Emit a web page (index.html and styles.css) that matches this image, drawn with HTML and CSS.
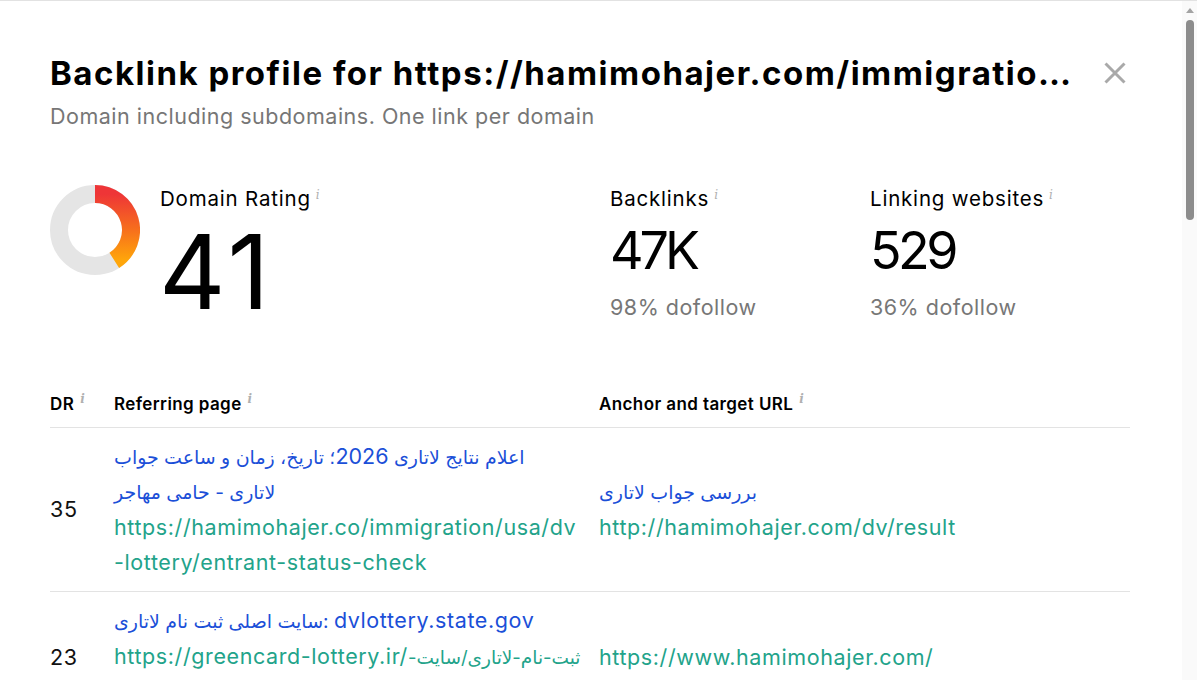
FILE: index.html
```html
<!DOCTYPE html>
<html lang="en">
<head>
<meta charset="utf-8">
<title>Backlink profile</title>
<link rel="stylesheet" href="styles.css">
</head>
<body>
<div class="page">
  <div class="modal">
    <header class="head">
      <div class="head-row">
        <h1 class="title">Backlink profile for https://hamimohajer.com/immigration/usa/dv-lottery/entrant-status-check</h1>
        <button class="close" aria-label="Close">
          <svg width="24" height="24" viewBox="0 0 24 24"><path d="M2.5 2.5 L21.5 21.5 M21.5 2.5 L2.5 21.5" stroke="#a9a9a9" stroke-width="3" fill="none"/></svg>
        </button>
      </div>
      <p class="subtitle">Domain including subdomains. One link per domain</p>
    </header>

    <section class="stats">
      <div class="stat stat-dr">
        <svg class="donut" width="90" height="90" viewBox="0 0 90 90">
          <defs>
            <linearGradient id="arc" x1="0" y1="0" x2="0" y2="1">
              <stop offset="0" stop-color="#ee3537"/>
              <stop offset="0.55" stop-color="#f7701c"/>
              <stop offset="1" stop-color="#ffa60a"/>
            </linearGradient>
          </defs>
          <circle cx="45" cy="45" r="36" fill="none" stroke="#e5e5e5" stroke-width="18"/>
          <path d="M45 9 A36 36 0 0 1 64.3 75.4" fill="none" stroke="url(#arc)" stroke-width="18"/>
        </svg>
        <div class="dr-text">
          <div class="label">Domain Rating<span class="info">i</span></div>
          <div class="dr-value">41</div>
        </div>
      </div>
      <div class="stat stat-bl">
        <div class="label">Backlinks<span class="info">i</span></div>
        <div class="value">47K</div>
        <div class="sub">98% dofollow</div>
      </div>
      <div class="stat stat-lw">
        <div class="label">Linking websites<span class="info">i</span></div>
        <div class="value">529</div>
        <div class="sub">36% dofollow</div>
      </div>
    </section>

    <table class="links">
      <thead>
        <tr>
          <th class="col-dr">DR<span class="info">i</span></th>
          <th class="col-ref">Referring page<span class="info">i</span></th>
          <th class="col-anchor">Anchor and target URL<span class="info">i</span></th>
        </tr>
      </thead>
      <tbody>
        <tr>
          <td class="col-dr">35</td>
          <td class="col-ref">
            <a class="page-title">اعلام نتایج لاتاری <span class="latin">2026</span>؛ تاریخ، زمان و ساعت جواب لاتاری - حامی مهاجر</a>
            <a class="url url-break">https://hamimohajer.co/immigration/usa/dv-lottery/entrant-status-check</a>
          </td>
          <td class="col-anchor">
            <a class="page-title">بررسی جواب لاتاری</a>
            <a class="url">http://hamimohajer.com/dv/result</a>
          </td>
        </tr>
        <tr>
          <td class="col-dr">23</td>
          <td class="col-ref">
            <a class="page-title">سایت اصلی ثبت نام لاتاری: <span class="latin">dvlottery.state.gov</span></a>
            <a class="url">https://greencard-lottery.ir/<span class="fa">ثبت-نام-لاتاری/سایت-اصلی-ثبت-نام-لاتاری/</span></a>
          </td>
          <td class="col-anchor">
            <a class="url">https://www.hamimohajer.com/</a>
          </td>
        </tr>
      </tbody>
    </table>
  </div>
  <div class="scrollbar" aria-hidden="true">
    <div class="scroll-arrow"></div>
    <div class="scroll-thumb"></div>
  </div>
</div>
</body>
</html>
```

FILE: styles.css
```css
html, body {
  margin: 0;
  padding: 0;
  background: #fff;
  overflow: hidden;
}

body {
  font-family: Inter, "Noto Sans", "DejaVu Sans", sans-serif;
  color: #111;
}

.page {
  display: flex;
  height: 679px;
  border-top: 1px solid #e2e2e2;
  overflow: hidden;
}

.modal {
  flex: 1;
  min-width: 0;
  padding: 51px 52px 40px 50px;
}

.scrollbar {
  flex: none;
  width: 15px;
  background: #fafafa;
  display: flex;
  flex-direction: column;
  align-items: center;
}

.scroll-arrow {
  margin-top: 7px;
  width: 0;
  height: 0;
  border-left: 4px solid transparent;
  border-right: 4px solid transparent;
  border-bottom: 5px solid #a3a3a3;
}

.scroll-thumb {
  margin-top: 7px;
  width: 8px;
  height: 200px;
  border-radius: 4px;
  background: #8c8c8c;
}

.head-row {
  display: flex;
  align-items: center;
  gap: 20px;
}

.title {
  flex: 1;
  min-width: 0;
  margin: 0;
  font-size: 33px;
  line-height: 42px;
  font-weight: 700;
  letter-spacing: 1.5px;
  white-space: nowrap;
  overflow: hidden;
  text-overflow: ellipsis;
  color: #000;
}

.close {
  flex: none;
  width: 30px;
  height: 30px;
  border: 0;
  padding: 0;
  background: none;
  display: flex;
  align-items: center;
  justify-content: center;
}

.subtitle {
  margin: 10px 0 0;
  font-size: 21.5px;
  line-height: 24px;
  letter-spacing: 0.5px;
  color: #767676;
}

.stats {
  display: flex;
  margin-top: 53px;
}

.stat-dr {
  width: 560px;
  display: flex;
  align-items: flex-start;
  gap: 20px;
}

.stat-bl {
  width: 260px;
}

.donut {
  display: block;
  flex: none;
  margin-top: 4px;
}

.label {
  font-size: 20.5px;
  line-height: 26px;
  letter-spacing: 0.8px;
  color: #000;
  margin-top: 1px;
}

.info {
  font-family: "DejaVu Serif", serif;
  font-style: italic;
  font-size: 12px;
  letter-spacing: 0;
  color: #b0b0b0;
  vertical-align: 7px;
  margin-left: 5px;
}

.dr-value {
  font-size: 103px;
  line-height: 90px;
  letter-spacing: 4px;
  margin-left: -1px;
  margin-top: 15px;
  color: #000;
}

.value {
  font-size: 52px;
  line-height: 50px;
  letter-spacing: -4px;
  margin-top: 14px;
  color: #000;
}

.stat-lw .value {
  letter-spacing: -3.5px;
}

.sub {
  margin-top: 19px;
  font-size: 21.5px;
  line-height: 24px;
  letter-spacing: 0.5px;
  color: #777;
}

.links {
  margin-top: 68px;
  width: 100%;
  border-collapse: collapse;
  table-layout: fixed;
}

.links th {
  text-align: left;
  font-size: 17px;
  font-weight: 600;
  line-height: 24px;
  letter-spacing: 0.4px;
  padding: 0 0 11px;
  color: #000;
  border-bottom: 1px solid #e3e3e3;
}

.links td {
  vertical-align: middle;
  font-size: 21.5px;
  line-height: 35px;
  letter-spacing: 0.6px;
  padding: 11px 0;
  border-bottom: 1px solid #e3e3e3;
  color: #111;
}

.col-dr {
  width: 64px;
}

.col-ref {
  width: 485px;
}

.links td.col-ref {
  padding-right: 18px;
}

.links th .info {
  margin-left: 6px;
}

.page-title {
  display: block;
  color: #1b4fd8;
  font-size: 19px;
  letter-spacing: 0;
}

.col-ref .page-title {
  max-width: 440px;
}

.latin {
  font-size: 21.5px;
  letter-spacing: 0.6px;
}

.fa {
  font-size: 18.5px;
  letter-spacing: 0;
}

.url {
  display: block;
  color: #22a38a;
}

.url-break {
  word-break: break-all;
}
```
